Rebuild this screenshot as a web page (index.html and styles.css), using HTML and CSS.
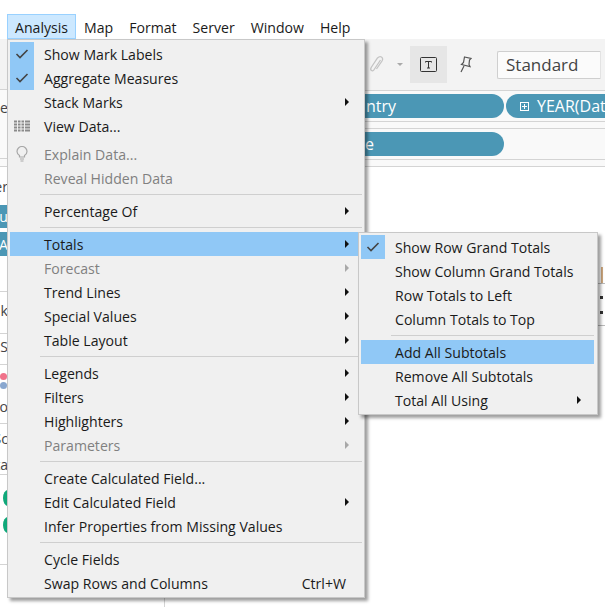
FILE: index.html
```html
<!DOCTYPE html>
<html lang="en">
<head>
    <meta charset="UTF-8">
    <meta name="viewport" content="width=device-width, initial-scale=1.0">
    <title>Analysis menu - Totals</title>
    <link rel="stylesheet" href="styles.css">
</head>
<body>
    <header class="menubar">
        <a class="menubar-item active">Analysis</a>
        <a class="menubar-item">Map</a>
        <a class="menubar-item">Format</a>
        <a class="menubar-item">Server</a>
        <a class="menubar-item">Window</a>
        <a class="menubar-item">Help</a>
    </header>

    <div class="workspace">
        <aside class="sidebar">
            <div class="strip s-tools"></div>
            <div class="strip s-e">e</div>
            <div class="strip s-gap"></div>
            <div class="strip s-er">er</div>
            <div class="strip s-pill">ou</div>
            <div class="strip s-pill s-pill2">LA</div>
            <div class="strip s-blank"></div>
            <div class="strip s-k">k</div>
            <div class="strip s-s">S</div>
            <div class="strip s-marks">
                <span class="dot red"></span>
                <span class="dot blue"></span>
                <span class="lo">lo</span>
            </div>
            <div class="strip s-sc">
                <span>Sc</span>
                <span>ta</span>
            </div>
            <div class="strip s-green">
                <span class="green"></span>
                <span class="green"></span>
            </div>
        </aside>
        <main class="content">
            <div class="toolbar">
                <svg class="clip" width="14" height="17" viewBox="0 0 14 17"><path d="M10.500 4 L4.500 13 Q3 15.500 1.500 14.500 Q0 13.500 1.500 11 L7.500 2 Q9.500 0 11.500 1 Q13.500 2.500 12 5 L6.500 13" fill="none" stroke="#c4c4c4" stroke-width="1.300"/></svg>
                <span class="caret"></span>
                <span class="tool-btn">
                    <svg width="18" height="16" viewBox="0 0 18 16"><rect x="0.500" y="0.500" width="16" height="14" rx="1" fill="none" stroke="#333"/><path d="M5.500 4.500 H11.500 M5.500 4.500 V5.500 M11.500 4.500 V5.500 M8.500 4.500 V11 M7 11 H10" fill="none" stroke="#333"/></svg>
                </span>
                <svg class="pin" width="14" height="17" viewBox="0 0 14 17"><path d="M6.500 1 L13 2.500 L11.500 4 L11 8.500 L12 10.500 L3.500 8.500 L5.500 6.500 Z M6 10 L3 16" fill="none" stroke="#555" stroke-width="1.200"/></svg>
                <div class="mode-select"><span>Standard</span></div>
            </div>
            <div class="shelves">
                <div class="shelf shelf-first">
                    <span class="pill pill-country">Country</span>
                    <span class="pill pill-year"><span class="plus"></span>YEAR(Date)</span>
                </div>
                <div class="shelf shelf-second">
                    <span class="pill pill-wide">Sales Type</span>
                </div>
            </div>
            <div class="grid-bits">
                <span class="tick"></span>
                <span class="grid-line"></span>
                <span class="cell-dots"></span>
                <span class="cell-dots"></span>
                <span class="grid-line"></span>
            </div>
        </main>
    </div>

    <nav class="menu main-menu">
        <div class="row checked"><span class="check"><svg width="14" height="10" viewBox="0 0 14 10"><path d="M1.500 5 L5 8.500 L12.500 1" fill="none" stroke="#444" stroke-width="1.600"/></svg></span>Show Mark Labels</div>
        <div class="row checked"><span class="check"><svg width="14" height="10" viewBox="0 0 14 10"><path d="M1.500 5 L5 8.500 L12.500 1" fill="none" stroke="#444" stroke-width="1.600"/></svg></span>Aggregate Measures</div>
        <div class="row">Stack Marks<i class="arrow"></i></div>
        <div class="row">
            <span class="icon"><svg width="16" height="12" viewBox="0 0 16 12"><path d="M0 1.500 H16 M0 4.500 H16 M0 7.500 H16 M0 10.500 H16" stroke="#8a8a8a" stroke-width="2"/><path d="M3.500 0 V12 M7 0 V12 M10.500 0 V12" stroke="#efefef" stroke-width="1"/></svg></span>
            View Data...
        </div>
        <div class="row tall disabled">
            <span class="icon"><svg width="12" height="17" viewBox="0 0 12 17"><path d="M3.500 11 V9.500 Q1 8 1 5.500 A5 5 0 0 1 11 5.500 Q11 8 8.500 9.500 V11 Z M4 13 H8 M4.500 15 H7.500" fill="none" stroke="#a8a8a8" stroke-width="1.200"/></svg></span>
            Explain Data...
        </div>
        <div class="row disabled">Reveal Hidden Data</div>
        <div class="sep"></div>
        <div class="row">Percentage Of<i class="arrow"></i></div>
        <div class="sep"></div>
        <div class="row selected">Totals<i class="arrow"></i></div>
        <div class="row disabled">Forecast<i class="arrow"></i></div>
        <div class="row">Trend Lines<i class="arrow"></i></div>
        <div class="row">Special Values<i class="arrow"></i></div>
        <div class="row">Table Layout<i class="arrow"></i></div>
        <div class="sep"></div>
        <div class="row">Legends<i class="arrow"></i></div>
        <div class="row">Filters<i class="arrow"></i></div>
        <div class="row">Highlighters<i class="arrow"></i></div>
        <div class="row disabled">Parameters<i class="arrow"></i></div>
        <div class="sep"></div>
        <div class="row">Create Calculated Field...</div>
        <div class="row">Edit Calculated Field<i class="arrow"></i></div>
        <div class="row">Infer Properties from Missing Values</div>
        <div class="sep"></div>
        <div class="row">Cycle Fields</div>
        <div class="row">Swap Rows and Columns<span class="shortcut">Ctrl+W</span></div>
    </nav>

    <nav class="menu sub-menu">
        <div class="row checked"><span class="check"><svg width="14" height="10" viewBox="0 0 14 10"><path d="M1.500 5 L5 8.500 L12.500 1" fill="none" stroke="#444" stroke-width="1.600"/></svg></span>Show Row Grand Totals</div>
        <div class="row">Show Column Grand Totals</div>
        <div class="row">Row Totals to Left</div>
        <div class="row">Column Totals to Top</div>
        <div class="sep"></div>
        <div class="row selected">Add All Subtotals</div>
        <div class="row">Remove All Subtotals</div>
        <div class="row">Total All Using<i class="arrow"></i></div>
    </nav>
</body>
</html>
```

FILE: styles.css
```css
* {
    margin: 0;
    padding: 0;
    box-sizing: border-box;
    font-family: "Open Sans", "Noto Sans", sans-serif;
}

html, body {
    width: 605px;
    height: 607px;
    overflow: hidden;
}

body {
    background-color: #fff;
    color: #1a1a1a;
    font-size: 14.1px;
    position: relative;
}

/* top menu bar */
.menubar {
    display: flex;
    height: 39px;
    padding: 14px 0 0 7px;
}

.menubar-item {
    height: 25px;
    line-height: 25px;
    padding: 0 7px;
    border: 1px solid transparent;
}

.menubar-item.active {
    background-color: #cce8ff;
    border-color: #99d1ff;
}

/* window behind the menus */
.workspace {
    display: flex;
    height: 568px;
    overflow: hidden;
}

.sidebar {
    width: 165px;
    flex: none;
    border-right: 1px solid #d4d4d4;
    color: #444;
}

.strip {
    width: 8px;
    overflow: hidden;
    display: flex;
    justify-content: flex-end;
    align-items: center;
    white-space: nowrap;
    border-bottom: 1px solid #d4d4d4;
}

.s-tools { height: 51px; background-color: #f3f3f3; }
.s-e { height: 69px; align-items: flex-start; padding-top: 8px; background-color: #fafafa; }
.s-gap { height: 8px; background-color: #fafafa; }
.s-er { height: 38px; border-bottom: 0; }
.s-blank { height: 36px; }
.s-k { height: 42px; padding-bottom: 4px; }
.s-s { height: 31px; align-items: flex-start; padding-top: 3px; }

.s-pill {
    height: 23px;
    background-color: #4b97b5;
    color: #fff;
    border-bottom: 0;
}

.s-pill2 {
    height: 24px;
    margin-top: 4px;
}

.s-marks {
    height: 59px;
    flex-direction: column;
    align-items: flex-start;
    justify-content: flex-start;
    padding-top: 8px;
}

.dot {
    width: 7px;
    height: 7px;
    border-radius: 50%;
    margin-bottom: 2px;
    flex: none;
}

.dot.red { background-color: #f0728a; }
.dot.blue { background-color: #89a7cf; }

.lo {
    align-self: flex-end;
    margin-top: 6px;
}

.s-sc {
    height: 51px;
    flex-direction: column;
    align-items: flex-end;
    gap: 7px;
}

.s-green {
    height: 90px;
    flex-direction: column;
    align-items: flex-end;
    justify-content: flex-start;
    padding-top: 15px;
    gap: 11px;
}

.green {
    width: 5px;
    height: 16px;
    flex: none;
    background-color: #10a87a;
    border-radius: 5px 0 0 5px / 8px 0 0 8px;
}

.content {
    flex: 1;
    min-width: 0;
}

.toolbar {
    height: 52px;
    background-color: #f3f3f3;
    display: flex;
    align-items: center;
    border-bottom: 1px solid #d4d4d4;
    padding-left: 205px;
}

.toolbar > * {
    flex: none;
}

.clip { margin-right: 13px; }

.caret {
    width: 0;
    height: 0;
    border-left: 3px solid transparent;
    border-right: 3px solid transparent;
    border-top: 3px solid #aaa;
    margin-right: 7px;
}

.tool-btn {
    width: 37px;
    height: 37px;
    background-color: #e6e6e6;
    display: flex;
    align-items: center;
    justify-content: center;
}

.pin { margin-left: 11px; }

.mode-select {
    margin-left: 25px;
    width: 104px;
    height: 28px;
    background-color: #fbfbfb;
    border: 1px solid #cfcfcf;
    border-right-color: #e3e3e3;
    border-radius: 2px 0 0 2px;
    line-height: 26px;
    padding-left: 8px;
    font-size: 17px;
    color: #444;
}

.shelves {
    background-color: #f9f9f9;
    padding-bottom: 6px;
    border-bottom: 1px solid #d4d4d4;
}

.shelf {
    padding-top: 3px;
    border-bottom: 1px solid #d4d4d4;
    display: flex;
    white-space: nowrap;
}

.shelf-first {
    height: 31px;
    margin-bottom: 6px;
}

.shelf-second {
    height: 32px;
    border-top: 1px solid #d4d4d4;
}

.pill {
    height: 24px;
    line-height: 25px;
    border-radius: 12px;
    background-color: #4b97b5;
    color: #fff;
    font-size: 16px;
    flex: none;
}

.pill-country {
    width: 339px;
    text-align: right;
    padding-right: 108px;
}

.pill-year {
    width: 200px;
    margin-left: 2px;
    padding-left: 14px;
    display: flex;
    align-items: center;
}

.pill-wide {
    width: 339px;
    text-align: right;
    padding-right: 130px;
}

.plus {
    width: 9px;
    height: 9px;
    border: 1px solid #fff;
    margin-right: 8px;
    background: linear-gradient(#fff, #fff) center / 5px 1px no-repeat, linear-gradient(#fff, #fff) center / 1px 5px no-repeat;
}

.grid-bits {
    padding: 100px 0 0 433px;
    display: flex;
    flex-direction: column;
}

.grid-line {
    height: 1px;
    background-color: #bbb;
}

.tick {
    width: 2px;
    height: 16px;
    margin-left: 3px;
    background-color: #d0aa80;
}

.cell-dots {
    width: 3px;
    height: 3px;
    margin: 12px 0 0 2px;
    background-color: #333;
}

.cell-dots + .grid-line {
    margin-top: 11px;
}

/* dropdown menus */
.menu {
    position: absolute;
    background-color: #f0f0f0;
    border: 1px solid #c8c8c8;
    box-shadow: 3px 3px 3px rgba(0, 0, 0, 0.38);
    white-space: nowrap;
}

.main-menu {
    left: 7px;
    top: 39px;
    width: 358px;
    height: 559px;
    padding: 2px;
}

.sub-menu {
    left: 358px;
    top: 232px;
    width: 240px;
    height: 183px;
    padding: 2px 3px 2px 2px;
}

.row {
    position: relative;
    height: 24px;
    line-height: 26px;
    padding-left: 34px;
    color: #1a1a1a;
}

.row.tall {
    height: 28px;
    padding-top: 4px;
}

.row.disabled {
    color: #808080;
}

.row.selected,
.check {
    background-color: #90c8f6;
}

.check,
.icon {
    position: absolute;
    left: 0;
    top: 0;
    width: 24px;
    height: 24px;
    display: flex;
    align-items: center;
    justify-content: center;
}

.row.tall .icon {
    top: 4px;
}

.sep {
    height: 9px;
    margin-left: 30px;
    padding-top: 4px;
}

.sep::after {
    content: "";
    display: block;
    height: 1px;
    background-color: #cfcfcf;
}

.arrow {
    position: absolute;
    right: 13px;
    top: 8px;
    width: 0;
    height: 0;
    border-top: 4px solid transparent;
    border-bottom: 4px solid transparent;
    border-left: 4px solid #111;
}

.row.disabled .arrow {
    border-left-color: #a8a8a8;
}

.shortcut {
    position: absolute;
    right: 16px;
    top: 0;
}
```
